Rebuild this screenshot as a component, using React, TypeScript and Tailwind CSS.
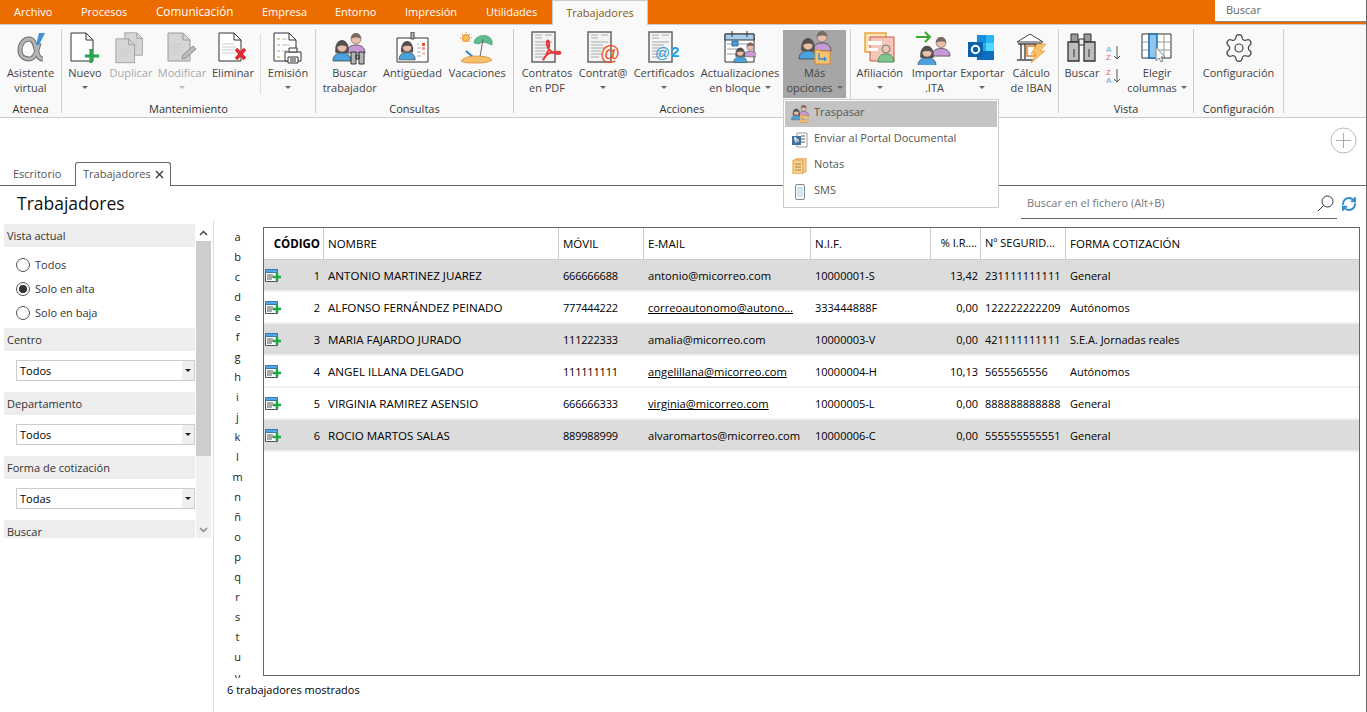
import React from "react";
import { RefreshCw, Settings } from "lucide-react";

const Caret = ({ color = "#666" }: { color?: string }) => (
  <svg width="6" height="3" viewBox="0 0 6 3" className="inline-block">
    <path d="M0 0h6L3 3z" fill={color} />
  </svg>
);

// iconos de la cinta
const Person = ({ x, y, s = 1, shirt, hair, long }: { x: number; y: number; s?: number; shirt: string; hair: string; long?: boolean }) => (
  <g transform={`translate(${x} ${y}) scale(${s})`}>
    <path d="M0 22c0-6 4-8 9-8s9 2 9 8z" fill={shirt} stroke="#444" strokeWidth="0.8" />
    {long && <path d="M2.500 14C1 6 5 1 9 1s8 5 6.500 13z" fill={hair} />}
    <circle cx="9" cy="8" r="5" fill="#e9bda8" stroke="#555" strokeWidth="0.6" />
    <path d="M4 8c0-4 2-6 5-6s5 2 5 6c-2-2-7-2-10 0z" fill={hair} />
  </g>
);

const Couple = () => (
  <>
    <Person x={15} y={0} shirt="#c79ad6" hair="#7b6a64" />
    <Person x={1} y={8} shirt="#4aa3df" hair="#54504e" long />
  </>
);

const Doc = ({ gray, lines }: { gray?: boolean; lines?: boolean }) => (
  <>
    <path d="M1 1h15l7 7v21H1z" fill={gray ? "#d6d6d6" : "#fff"} stroke={gray ? "#999" : "#333"} strokeWidth="1" />
    <path d="M16 1v7h7" fill="none" stroke={gray ? "#999" : "#333"} />
    {lines && <path d="M4 12h12M4 15h14M4 18h12M4 21h14" stroke="#ccc" />}
  </>
);

const FormDoc = () => (
  <>
    <path d="M1 1h23v30H1z" fill="#f3f3f3" stroke="#666" strokeWidth="1.500" />
    <path d="M4 4h7M14 4h7M4 7h7M4 11h17M4 14h12M4 17h14M4 20h10M4 23h12M4 26h8" stroke="#aaa" />
  </>
);

const Svg = ({ w = 36, h = 34, children }: { w?: number; h?: number; children: React.ReactNode }) => (
  <svg width={w} height={h} viewBox={`0 0 ${w} ${h}`}>
    {children}
  </svg>
);

const alphaPath = "M24 11c-2 8-4 16-10 16-5 0-9-3-9-9s4-11 9-11c6 0 6 8 8 13 1 4 2 7 6 7";

const icons: Record<string, React.ReactNode> = {
  alpha: (
    <Svg w={32} h={32}>
      <path d={alphaPath} fill="none" stroke="#6f6f6f" strokeWidth="5" />
      <path d={alphaPath} fill="none" stroke="#b4b4b4" strokeWidth="3" />
      <path d="M24 1h6l-6 12h-3z" fill="#3f93d8" />
    </Svg>
  ),
  nuevo: (
    <Svg w={30} h={32}>
      <Doc />
      <path d="M21 17v14M15 24h14" stroke="#1fa64a" strokeWidth="3" />
    </Svg>
  ),
  duplicar: (
    <Svg w={32} h={32}>
      <g transform="translate(9 0) scale(.8 .8)">
        <Doc gray lines />
      </g>
      <g transform="translate(0 6) scale(.85 .85)">
        <Doc gray lines />
      </g>
    </Svg>
  ),
  modificar: (
    <Svg w={30} h={32}>
      <Doc gray lines />
      <path d="M15 27l1-4 10-9 3 3-10 9z" fill="#bbb" stroke="#8f8f8f" />
    </Svg>
  ),
  eliminar: (
    <Svg w={30} h={32}>
      <Doc lines />
      <path d="M18 17l9 10M27 17l-9 10" stroke="#e0282e" strokeWidth="3.500" />
    </Svg>
  ),
  emision: (
    <Svg w={30} h={32}>
      <Doc />
      <path d="M4 7h3M4 13h3M4 19h3M4 25h3" stroke="#e8952c" />
      <path d="M9 7h5M9 13h8M9 19h6" stroke="#bbb" />
      <path d="M12 20h16v9H12z" fill="#fff" stroke="#333" />
      <path d="M16 16h8v4h-8zM15 25h10v6H15z" fill="#fff" stroke="#333" />
      <path d="M17 27h6M17 29h6" stroke="#333" />
    </Svg>
  ),
  buscarTrab: (
    <Svg>
      <Couple />
      <path d="M19 21h5v12h-5zM27 21h5v12h-5zM24 24h3v4h-3z" fill="#b5b5b5" stroke="#333" />
    </Svg>
  ),
  antiguedad: (
    <Svg w={34} h={32}>
      <path d="M1 6h31v24H1z" fill="#fff" stroke="#333" />
      <path d="M15 0h3v7h-3z" fill="#bbb" stroke="#444" />
      <Person x={3} y={8} s={0.9} shirt="#4aa3df" hair="#54504e" long />
      <path d="M21 12h2M21 16h4M21 20h4M21 24h4" stroke="#aaa" />
      <path d="M26 11h3v3h-3z" fill="#e2572e" />
      <path d="M26 15h3v3h-3z" fill="#ef9a8c" />
      <path d="M26 20h3v3h-3z" fill="#f6c8bc" />
    </Svg>
  ),
  vacaciones: (
    <Svg w={34} h={32}>
      <circle cx="6" cy="6" r="3.500" fill="#f6c05c" stroke="#e8862c" />
      <path d="M6 0v1M0 6h1M11 6h1M2 2l1 1M10 2l-1 1M2 10l1-1M10 10l-1-1" stroke="#e8862c" />
      <path d="M14 11c0-6 8-9 13-7 4 1 6 5 5 9l-5-2-5-1-3 2z" fill="#5dbd8f" stroke="#3a8f6c" strokeWidth="0.6" />
      <path d="M23 7l-3 18" stroke="#666" />
      <path d="M6 19l7 6h11" fill="none" stroke="#2f86cf" strokeWidth="2" />
      <path d="M1 29c3-4 10-5 16-5s13 1 15 4c-3 2-6 3-15 3S4 31 1 29z" fill="#f4c06c" stroke="#e5892e" strokeWidth="0.8" />
    </Svg>
  ),
  contratos: (
    <Svg w={32} h={33}>
      <FormDoc />
      <path d="M12 29c5-6 7-14 6-18-1-3-3-1-2 3 1 5 6 9 11 9 4 0 3-3-2-2-6 0-11 3-13 8z" fill="none" stroke="#e5363c" strokeWidth="2" />
    </Svg>
  ),
  contrat: (
    <Svg w={32} h={33}>
      <FormDoc />
      <text x="13" y="29" fontSize="20" fontFamily="Liberation Sans" fill="#e8592f">@</text>
    </Svg>
  ),
  certificados: (
    <Svg w={32} h={33}>
      <FormDoc />
      <text x="7" y="27" fontSize="15" fontFamily="Liberation Sans" fill="#2c9ee0">@</text>
      <text x="23" y="26" fontSize="15" fontWeight="700" fontFamily="Liberation Sans" fill="#13a3e8">2</text>
    </Svg>
  ),
  actualizaciones: (
    <Svg w={32} h={33}>
      <path d="M1 3h29v28H1z" fill="#fff" stroke="#333" />
      <path d="M1 3h29v6H1z" fill="#a7cdec" stroke="#333" />
      <path d="M8 0v6M23 0v6" stroke="#333" />
      <path d="M3 13h8M3 18h12M3 23h8M14 13h12" stroke="#ccc" strokeWidth="2" />
      <path d="M8 10h6v5H8z" fill="#4d9ad8" stroke="#2d6fa5" />
      <g transform="translate(9 10) scale(.72)">
        <Couple />
      </g>
    </Svg>
  ),
  mas: (
    <Svg w={34} h={34}>
      <g transform="translate(0 -2)">
        <Couple />
      </g>
      <path d="M17 19h5l1 1h9v13H17z" fill="#f6c271" stroke="#d68a2c" />
      <path d="M21 22v6h7M26 26l2 2-2 2" fill="none" stroke="#2f8fd8" strokeWidth="1.300" />
    </Svg>
  ),
  afiliacion: (
    <Svg w={32} h={32}>
      <path d="M1 1h21v19H1z" fill="#fbe3b8" stroke="#eca53b" strokeWidth="1.500" />
      <path d="M6 5h24v24H6z" fill="#f4c6b8" stroke="#c9584a" />
      <path d="M4 9h14v4H4zM4 16h10v3H4z" fill="#fff" />
      <circle cx="22" cy="17" r="4" fill="#eec9b2" stroke="#777" />
      <path d="M14 30c0-6 4-8 8-8s8 2 8 8z" fill="#7fc68c" stroke="#4d8c5e" />
    </Svg>
  ),
  importar: (
    <Svg w={36} h={34}>
      <path d="M0 6h14M9 1l5 5-5 5" fill="none" stroke="#3aa635" strokeWidth="2" />
      <g transform="translate(1 8) scale(1 .95)">
        <Person x={15} y={-4} shirt="#c79ad6" hair="#7b6a64" />
        <Person x={1} y={6} shirt="#4aa3df" hair="#54504e" long />
      </g>
    </Svg>
  ),
  exportar: (
    <Svg w={30} h={28}>
      <path d="M10 1h17v24H10z" fill="#1490df" />
      <path d="M19 1h8v8h-8z" fill="#29b6f6" />
      <path d="M10 9h9v8h-9z" fill="#28a8ea" />
      <path d="M19 9h8v8h-8z" fill="#50d9ff" />
      <path d="M10 17l17 0v9H10z" fill="#0f6cbd" />
      <path d="M1 8h15v15H1z" fill="#0a64ad" />
      <circle cx="8.500" cy="15.500" r="3.700" fill="none" stroke="#fff" strokeWidth="2" />
    </Svg>
  ),
  iban: (
    <Svg w={32} h={32}>
      <path d="M2 10L15 2l13 8z" fill="#fff" stroke="#444" />
      <path d="M3 12h24M6 12v15M10 12v15M20 12v7M2 28h17" stroke="#444" strokeWidth="1.400" />
      <path d="M12 14h8v10h-8z" fill="#fff" stroke="#e8852c" strokeWidth="1.500" />
      <path d="M22 12h9l-6 7h5L16 31l5-9h-5z" fill="#f4c068" stroke="#dd9536" strokeWidth="0.6" />
    </Svg>
  ),
  buscar: (
    <Svg w={32} h={30}>
      <path d="M5 1h7v8H5zM18 1h7v8h-7z" fill="#9b9b9b" stroke="#333" />
      <path d="M2 9h11v19H2zM18 9h11v19H18z" fill="#bdbdbd" stroke="#333" strokeWidth="1.300" />
      <path d="M13 6h5v6h-5z" fill="#eee" stroke="#333" />
      <path d="M8 16v8M23 16v8" stroke="#333" />
    </Svg>
  ),
  elegir: (
    <Svg w={32} h={30}>
      <path d="M1 1h29v24H1z" fill="#fff" stroke="#333" />
      <path d="M1 9h29M1 17h29M8 1v24M23 1v24" stroke="#999" />
      <path d="M8 1h8v24H8z" fill="#90c5ee" stroke="#1b6fb2" strokeWidth="1.500" />
      <path d="M15 14v14l3-3 2 4 2-1-2-4h4z" fill="#f4f4f4" stroke="#888" />
    </Svg>
  ),
  config: <Settings size={32} strokeWidth={0.9} color="#444" />,
};

type BtnProps = {
  w: string;
  icon: React.ReactNode;
  top: string;
  bottom?: string;
  caret?: boolean;
  off?: boolean;
};

const Btn = ({ w, icon, top, bottom, caret, off }: BtnProps) => (
  <div className={`${w} flex flex-col items-center leading-[15px] whitespace-nowrap ${off ? "text-[#a8a8a8]" : "text-[#444]"}`}>
    <div className="h-[35px] flex items-center justify-center">{icon}</div>
    <span>{top}</span>
    {(bottom || caret) && (
      <span className="h-[15px] flex items-center gap-[4px]">
        {bottom}
        {caret && <Caret color={off ? "#bbb" : "#666"} />}
      </span>
    )}
  </div>
);

const Group = ({ w, label, children }: { w: string; label?: string; children: React.ReactNode }) => (
  <div className={`${w} h-[84px] mt-[4px] border-r border-[#ccc] flex flex-col`}>
    <div className="flex pt-[1px] h-[72px] shrink-0">{children}</div>
    <div className="text-center text-[#333] leading-[15px]">{label}</div>
  </div>
);

const Ribbon = () => (
  <div className="h-[94px] bg-[#f9f9f9] border-t border-b border-[#ccc] flex">
    <Group w="w-[62px]" label="Atenea">
      <Btn w="w-[61px]" icon={icons.alpha} top="Asistente" bottom="virtual" />
    </Group>
    <Group w="w-[254px]" label="Mantenimiento">
      <Btn w="w-[46px]" icon={icons.nuevo} top="Nuevo" caret />
      <Btn w="w-[46px]" icon={icons.duplicar} top="Duplicar" off />
      <Btn w="w-[56px]" icon={icons.modificar} top="Modificar" caret off />
      <Btn w="w-[46px]" icon={icons.eliminar} top="Eliminar" />
      <div className="ml-[4px] w-px h-[60px] mt-[4px] bg-[#ddd]" />
      <Btn w="w-[54px]" icon={icons.emision} top="Emisión" caret />
    </Group>
    <Group w="w-[198px]" label="Consultas">
      <Btn w="w-[68px]" icon={icons.buscarTrab} top="Buscar" bottom="trabajador" />
      <Btn w="w-[58px]" icon={icons.antiguedad} top="Antigüedad" />
      <Btn w="w-[72px]" icon={icons.vacaciones} top="Vacaciones" />
    </Group>
    <Group w="w-[337px]" label="Acciones">
      <Btn w="w-[66px]" icon={icons.contratos} top="Contratos" bottom="en PDF" />
      <Btn w="w-[46px]" icon={icons.contrat} top="Contrat@" caret />
      <Btn w="w-[76px]" icon={icons.certificados} top="Certificados" caret />
      <Btn w="w-[76px]" icon={icons.actualizaciones} top="Actualizaciones" bottom="en bloque" caret />
      <div className="ml-[5px] h-[68px] bg-[#a6a6a6]">
        <Btn w="w-[63px]" icon={icons.mas} top="Más" bottom="opciones" caret />
      </div>
    </Group>
    <Group w="w-[208px]">
      <Btn w="w-[58px]" icon={icons.afiliacion} top="Afiliación" caret />
      <Btn w="w-[52px]" icon={icons.importar} top="Importar" bottom=".ITA" />
      <Btn w="w-[44px]" icon={icons.exportar} top="Exportar" caret />
      <Btn w="w-[54px]" icon={icons.iban} top="Cálculo" bottom="de IBAN" />
    </Group>
    <Group w="w-[135px]" label="Vista">
      <Btn w="w-[46px]" icon={icons.buscar} top="Buscar" />
      <div className="w-[22px] pl-[1px] pt-[15px] flex flex-col gap-[7px]">
        {[["A", "Z", "#5ba6df", "#e8636b"], ["Z", "A", "#e8636b", "#5ba6df"]].map(([a, b, c, d], i) => (
          <svg key={i} width="16" height="16" viewBox="0 0 16 16">
            <text x="0" y="7" fontSize="8" fontFamily="Liberation Sans" fill={c}>{a}</text>
            <text x="0" y="15" fontSize="8" fontFamily="Liberation Sans" fill={d}>{b}</text>
            <path d="M11 1v13M8 11l3 3 3-3" fill="none" stroke="#555" />
          </svg>
        ))}
      </div>
      <Btn w="w-[60px]" icon={icons.elegir} top="Elegir" bottom="columnas" caret />
    </Group>
    <Group w="w-[90px]" label="Configuración">
      <Btn w="w-[89px]" icon={icons.config} top="Configuración" />
    </Group>
  </div>
);

const MenuRow = ({ icon, label, on }: { icon: React.ReactNode; label: string; on?: boolean }) => (
  <div className={`h-[26px] flex items-center ${on ? "bg-[#c4c4c4]" : ""}`}>
    <div className="w-[29px] flex justify-center">{icon}</div>
    <span className="pb-[3px]">{label}</span>
  </div>
);

const DropMenu = () => (
  <div className="absolute left-[783px] top-[99px] w-[216px] h-[109px] bg-white border border-[#ccc] p-px text-[#555]">
    <MenuRow
      on
      label="Traspasar"
      icon={
        <svg width="18" height="18" viewBox="0 0 34 34">
          <g transform="translate(0 -2)">
            <Couple />
          </g>
          <path d="M17 19h5l1 1h9v13H17z" fill="#f6c271" stroke="#d68a2c" />
          <path d="M21 22v6h7" fill="none" stroke="#2f8fd8" strokeWidth="1.300" />
        </svg>
      }
    />
    <MenuRow
      label="Enviar al Portal Documental"
      icon={
        <svg width="16" height="16" viewBox="0 0 16 16">
          <path d="M5 1h10v14H5z" fill="#fff" stroke="#999" />
          <path d="M9 4h4M9 7h4M9 10h4" stroke="#555" />
          <path d="M0 4h9v9H0z" fill="#41719c" />
          <path d="M2 6h2v5M2 6h2v2H2M6 7v3" stroke="#fff" fill="none" />
        </svg>
      }
    />
    <MenuRow
      label="Notas"
      icon={
        <svg width="15" height="16" viewBox="0 0 15 16">
          <path d="M4 0h10v14H4z" fill="#f6cf92" stroke="#e8a54c" />
          <path d="M1 2h10v14H1z" fill="#f8d491" stroke="#e59b3c" />
          <path d="M3 6h6M3 9h6M3 12h6" stroke="#a5824f" />
        </svg>
      }
    />
    <MenuRow
      label="SMS"
      icon={
        <svg width="10" height="16" viewBox="0 0 10 16">
          <rect x="0.500" y="0.500" width="9" height="15" rx="1.500" fill="#fff" stroke="#888" />
          <path d="M2 2.500h6v10H2z" fill="#cfe6f7" />
        </svg>
      }
    />
  </div>
);

const SectionHeader = ({ children }: { children: React.ReactNode }) => (
  <div className="h-[23px] bg-[#ededed] flex items-center pt-[1px] pl-[3px] text-[#333] shrink-0">{children}</div>
);

const Radio = ({ label, on }: { label: string; on?: boolean }) => (
  <div className="h-[24px] flex items-center pl-[12px] gap-[5px] text-[#333]">
    <span className="w-[14px] h-[14px] rounded-full border border-[#555] bg-white flex items-center justify-center">
      {on && <span className="w-[8px] h-[8px] rounded-full bg-[#333]" />}
    </span>
    {label}
  </div>
);

const Combo = ({ label }: { label: string }) => (
  <div className="ml-[12px] mt-[9px] mb-[11px] h-[21px] border border-[#ccc] flex items-center justify-between bg-white">
    <span className="pl-[3px] pt-[2px] text-black">{label}</span>
    <span className="w-[12px] h-[19px] bg-[#efefef] flex items-center justify-center">
      <Caret color="#222" />
    </span>
  </div>
);

const Sidebar = () => (
  <div className="w-[214px] shrink-0 border-r border-[#ddd] pt-[4px] pl-[4px] pr-[2px]">
    <div className="flex h-[314px] overflow-hidden">
      <div className="w-[191px] shrink-0">
        <SectionHeader>Vista actual</SectionHeader>
        <div className="pt-[6px] pb-[3px]">
          <Radio label="Todos" />
          <Radio label="Solo en alta" on />
          <Radio label="Solo en baja" />
        </div>
        <SectionHeader>Centro</SectionHeader>
        <Combo label="Todos" />
        <SectionHeader>Departamento</SectionHeader>
        <Combo label="Todos" />
        <SectionHeader>Forma de cotización</SectionHeader>
        <Combo label="Todas" />
        <SectionHeader>Buscar</SectionHeader>
      </div>
      <div className="ml-px w-[15px] flex flex-col bg-[#f0f0f0]">
        <div className="h-[17px] flex items-center justify-center bg-white">
          <svg width="9" height="6" viewBox="0 0 9 6">
            <path d="M1 5l3.500-3.500L8 5" fill="none" stroke="#444" strokeWidth="1.500" />
          </svg>
        </div>
        <div className="h-[215px] bg-[#cdcdcd]" />
        <div className="h-[65px]" />
        <div className="h-[17px] flex items-center justify-center">
          <svg width="9" height="6" viewBox="0 0 9 6">
            <path d="M1 1l3.500 3.500L8 1" fill="none" stroke="#888" strokeWidth="1.500" />
          </svg>
        </div>
      </div>
    </div>
  </div>
);

const rows = [
  ["1", "ANTONIO MARTINEZ JUAREZ", "666666688", "antonio@micorreo.com", "10000001-S", "13,42", "231111111111", "General", "g", ""],
  ["2", "ALFONSO FERNÁNDEZ PEINADO", "777444222", "correoautonomo@autono...", "333444888F", "0,00", "122222222209", "Autónomos", "", "u"],
  ["3", "MARIA FAJARDO JURADO", "111222333", "amalia@micorreo.com", "10000003-V", "0,00", "421111111111", "S.E.A. Jornadas reales", "g", ""],
  ["4", "ANGEL ILLANA DELGADO", "111111111", "angelillana@micorreo.com", "10000004-H", "10,13", "5655565556", "Autónomos", "", "u"],
  ["5", "VIRGINIA RAMIREZ ASENSIO", "666666333", "virginia@micorreo.com", "10000005-L", "0,00", "888888888888", "General", "", "u"],
  ["6", "ROCIO MARTOS SALAS", "889988999", "alvaromartos@micorreo.com", "10000006-C", "0,00", "555555555551", "General", "g", ""],
];

const RowIcon = () => (
  <svg width="17" height="14" viewBox="0 0 17 14">
    <path d="M0.500 0.500h12v12h-12z" fill="#fff" stroke="#555" />
    <path d="M0.500 0.500h12v3h-12z" fill="#5aa5e0" stroke="#3878ad" />
    <path d="M2 6h6M2 8h6M2 10h5" stroke="#555" />
    <path d="M12 4v8M8 8h8" stroke="#1fa64a" strokeWidth="2.500" />
  </svg>
);

const gridCols = "grid grid-cols-[60px_235px_85px_167px_120px_50px_85px_1fr]";

const Table = () => (
  <div className="w-[1097px] h-[449px] border border-[#666] text-black overflow-hidden">
    <div className={`${gridCols} h-[32px] border-b border-[#ccc] items-stretch text-[11.5px]`}>
      {["CÓDIGO", "NOMBRE", "MÓVIL", "E-MAIL", "N.I.F.", "% I.R....", "Nº SEGURID...", "FORMA COTIZACIÓN"].map((h, i) => (
        <div
          key={h}
          className={`flex items-center whitespace-nowrap ${i < 7 ? "border-r border-[#ccc]" : ""} ${i === 0 ? "font-bold justify-end pr-[3px]" : "pl-[4px]"} ${i === 5 ? "justify-end pl-0 pr-[3px] text-[11px]" : ""} ${i === 6 ? "text-[11px]" : ""}`}
        >
          {h}
        </div>
      ))}
    </div>
    {rows.map((r) => (
      <div key={r[0]} className={`${gridCols} h-[32px] pt-[2px] border-b-2 border-[#f0f0f0] items-center ${r[8] === "g" ? "bg-[#dcdcdc]" : "bg-white"}`}>
        <div className="flex items-center justify-between pl-px pr-[4px]">
          <RowIcon />
          <span>{r[0]}</span>
        </div>
        <div className="pl-[4px] text-[11.6px]">{r[1]}</div>
        <div className="pl-[4px] tracking-[-0.2px]">{r[2]}</div>
        <div className={`pl-[4px] text-[11.2px] ${r[9] === "u" ? "underline" : ""}`}>{r[3]}</div>
        <div className="pl-[4px]">{r[4]}</div>
        <div className="text-right pr-[3px]">{r[5]}</div>
        <div className="pl-[4px]">{r[6]}</div>
        <div className="pl-[4px]">{r[7]}</div>
      </div>
    ))}
  </div>
);

const letters = "abcdefghijklmnñopqrstuv".split("");

const menus = [
  ["Archivo", "w-[67px]"],
  ["Procesos", "w-[75px]"],
  ["Comunicación", "w-[106px] text-[11.7px]"],
  ["Empresa", "w-[73px]"],
  ["Entorno", "w-[70px]"],
  ["Impresión", "w-[81px]"],
  ["Utilidades", "w-[80px]"],
];

export default function App() {
  return (
    <div className="relative w-[1367px] h-[712px] overflow-hidden bg-white border-r border-[#666] font-['Open_Sans','Noto_Sans',sans-serif] text-[11px]">
      {/* barra de menús */}
      <div className="h-[24px] bg-[#ec6c00] flex items-start text-white">
        <div className="flex items-center h-[24px]">
          {menus.map(([m, cls]) => (
            <span key={m} className={`pl-[14px] ${cls}`}>{m}</span>
          ))}
        </div>
        <div className="h-[25px] w-[96px] bg-[#f9f9f9] border border-b-0 border-[#ccc] flex items-center justify-center text-[#8a5a10] relative z-10">
          Trabajadores
        </div>
        <div className="ml-auto w-[151px] h-[22px] bg-white border-b border-[#888] flex items-center pl-[11px] text-[#666]">
          Buscar
        </div>
      </div>
      <Ribbon />

      {/* pestañas */}
      <div className="h-[68px] border-b border-[#666] flex flex-col justify-between">
        <div className="flex justify-end pt-[9px] pr-[9px]">
          <svg width="27" height="27" viewBox="0 0 27 27">
            <circle cx="13.500" cy="13.500" r="12.500" fill="#fff" stroke="#bbb" />
            <path d="M13.500 6v15M6 13.500h15" stroke="#aaa" />
          </svg>
        </div>
        <div className="flex items-end h-[23px] text-[#555]">
          <span className="w-[75px] pl-[13px] h-[22px] flex items-center">Escritorio</span>
          <div className="w-[96px] h-[24px] mb-[-1px] border border-b-0 border-[#666] rounded-t-[3px] bg-white flex items-center pl-[7px] gap-[4px]">
            Trabajadores
            <svg width="9" height="9" viewBox="0 0 9 9">
              <path d="M1 1l7 7M8 1l-7 7" stroke="#333" strokeWidth="1.200" />
            </svg>
          </div>
        </div>
      </div>

      {/* título */}
      <div className="h-[34px] flex items-center justify-between pl-[17px] pr-[9px]">
        <h1 className="text-[17.5px] text-[#111]">Trabajadores</h1>
        <div className="flex items-center gap-[4px] pt-[1px]">
          <div className="w-[316px] h-[30px] border-b border-[#666] flex items-center justify-between pl-[5px] pr-[3px] text-[#777]">
            <span className="pl-px">Buscar en el fichero (Alt+B)</span>
            <svg width="17" height="17" viewBox="0 0 17 17">
              <circle cx="10.500" cy="6.500" r="5.500" fill="none" stroke="#333" />
              <path d="M6.500 10.500L1 16" stroke="#333" />
            </svg>
          </div>
          <RefreshCw size={16} strokeWidth={3} color="#2f8fd0" />
        </div>
      </div>

      {/* cuerpo */}
      <div className="flex h-[492px]">
        <Sidebar />
        <div className="flex-1 pt-[7px] flex flex-col">
          <div className="flex">
            <div className="w-[49px] h-[452px] overflow-hidden text-center text-[#222] pr-[2px]">
              {letters.map((l) => (
                <div key={l} className={`leading-[20px] ${l === "v" ? "h-[11px] overflow-hidden" : "h-[20px]"}`}>{l}</div>
              ))}
            </div>
            <Table />
          </div>
          <div className="pl-[13px] mt-[3px] text-black">6 trabajadores mostrados</div>
        </div>
      </div>
      <DropMenu />
    </div>
  );
}
